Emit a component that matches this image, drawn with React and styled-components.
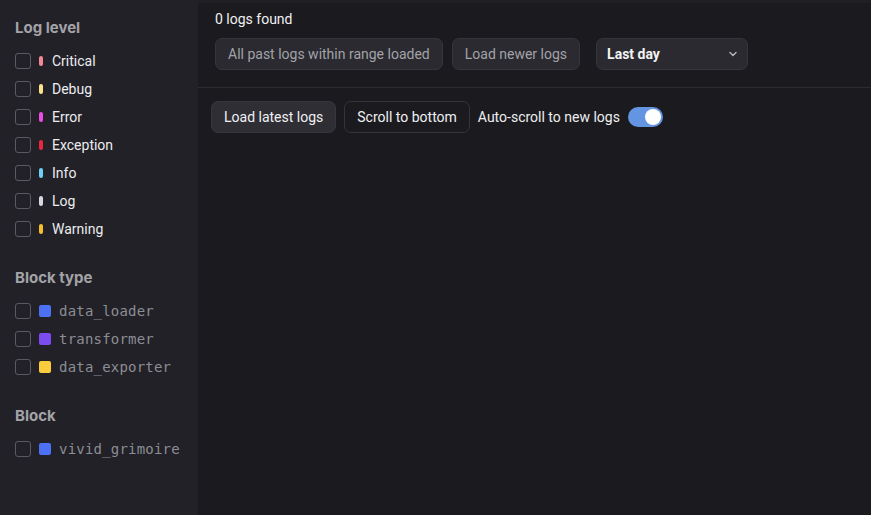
import React from 'react';
import styled, { createGlobalStyle } from 'styled-components';

const GlobalStyle = createGlobalStyle`
    html, body {
        margin: 0;
        padding: 0;
        background: #1c1c21;
        font-family: Roboto, "Noto Sans", sans-serif;
    }
`;

const LOG_LEVELS = [
    { name: 'Critical', color: '#f3889b' },
    { name: 'Debug', color: '#fce38a' },
    { name: 'Error', color: '#ea4ce8' },
    { name: 'Exception', color: '#ec263d' },
    { name: 'Info', color: '#6fd0f7' },
    { name: 'Log', color: '#d8d8e0' },
    { name: 'Warning', color: '#f5bf2c' },
];

const BLOCK_TYPES = [
    { name: 'data_loader', color: '#4d71f6' },
    { name: 'transformer', color: '#7d4cf0' },
    { name: 'data_exporter', color: '#fbcc3c' },
];

const BLOCKS = [{ name: 'vivid_grimoire', color: '#4d71f6' }];

const FilterSection = ({ title, items, mono }) => (
    <Section>
        <SectionTitle>{title}</SectionTitle>
        <List>
            {items.map((item) => (
                <Row key={item.name}>
                    <Checkbox />
                    {mono ? <Square $color={item.color} /> : <Pill $color={item.color} />}
                    <Label $mono={mono}>{item.name}</Label>
                </Row>
            ))}
        </List>
    </Section>
);

const App = () => {
    return (
        <>
            <GlobalStyle />
            <Page>
                <Sidebar>
                    <FilterSection title="Log level" items={LOG_LEVELS} />
                    <FilterSection title="Block type" items={BLOCK_TYPES} mono />
                    <FilterSection title="Block" items={BLOCKS} mono />
                </Sidebar>
                <Main>
                    <Header>
                        <Count>0 logs found</Count>
                        <Toolbar>
                            <GhostButton>All past logs within range loaded</GhostButton>
                            <GhostButton>Load newer logs</GhostButton>
                            <Select>
                                <span>Last day</span>
                                <svg width="12" height="12" viewBox="0 0 12 12">
                                    <path d="M3 4.5 L6 7.5 L9 4.5" fill="none" stroke="#b8b8be" strokeWidth="1.4" strokeLinecap="round" strokeLinejoin="round" />
                                </svg>
                            </Select>
                        </Toolbar>
                    </Header>
                    <Actions>
                        <Button $primary>Load latest logs</Button>
                        <Button>Scroll to bottom</Button>
                        <ToggleLabel>Auto-scroll to new logs</ToggleLabel>
                        <Toggle $on />
                    </Actions>
                </Main>
            </Page>
        </>
    );
};

export default App;

const Page = styled.div`
    display: flex;
    width: 871px;
    height: 515px;
    overflow: hidden;
`;

const Sidebar = styled.aside`
    width: 198px;
    flex-shrink: 0;
    background: #212127;
    padding: 17px 15px 0;
    box-sizing: border-box;
    display: flex;
    flex-direction: column;
    gap: 29px;
`;

const Section = styled.div`
    display: flex;
    flex-direction: column;
`;

const SectionTitle = styled.div`
    font-family: Inter, Roboto, sans-serif;
    font-weight: 700;
    font-size: 15px;
    line-height: 22px;
    color: #a3a3a8;
    margin-bottom: 13px;
`;

const List = styled.div`
    display: flex;
    flex-direction: column;
    gap: 10px;
`;

const Row = styled.label`
    display: flex;
    align-items: center;
    height: 18px;
`;

const Checkbox = styled.span`
    width: 14px;
    height: 14px;
    border: 1px solid #5a5a62;
    border-radius: 3px;
    box-sizing: content-box;
    margin-right: 8px;
`;

const Pill = styled.span`
    width: 4px;
    height: 10px;
    border-radius: 2px;
    background: ${(p) => p.$color};
    margin-right: 9px;
`;

const Square = styled.span`
    width: 12px;
    height: 12px;
    border-radius: 2px;
    background: ${(p) => p.$color};
    margin-right: 8px;
`;

const Label = styled.span`
    font-family: ${(p) => (p.$mono ? '"DejaVu Sans Mono", "Liberation Mono", monospace' : 'Roboto, sans-serif')};
    font-size: 14px;
    letter-spacing: ${(p) => (p.$mono ? '0.2px' : '0')};
    color: ${(p) => (p.$mono ? '#8d8d94' : '#ececef')};
`;

const Main = styled.main`
    flex: 1;
    background: #1b1b1f;
    border-top: 3px solid #1f1f24;
    display: flex;
    flex-direction: column;
`;

const Header = styled.div`
    padding: 8px 17px 17px;
    border-bottom: 1px solid #2b2b31;
    display: flex;
    flex-direction: column;
    gap: 10px;
`;

const Count = styled.div`
    font-size: 14px;
    line-height: 17px;
    color: #f0f0f2;
`;

const Toolbar = styled.div`
    display: flex;
    align-items: center;
`;

const GhostButton = styled.button`
    height: 32px;
    padding: 0 12px;
    margin-right: 9px;
    background: #2a2a30;
    border: 1px solid #35353b;
    border-radius: 7px;
    font-family: Roboto, sans-serif;
    font-size: 14px;
    color: #a2a2a8;
    &:nth-child(2) { margin-right: 16px; }
`;

const Select = styled.div`
    width: 152px;
    height: 32px;
    box-sizing: border-box;
    padding: 0 8px 0 10px;
    background: #2a2a30;
    border: 1px solid #35353b;
    border-radius: 7px;
    display: flex;
    align-items: center;
    justify-content: space-between;
    font-size: 14px;
    font-weight: 700;
    color: #f2f2f4;
`;

const Actions = styled.div`
    display: flex;
    align-items: center;
    padding: 13px 13px;
    gap: 8px;
`;

const Button = styled.button`
    height: 32px;
    padding: 0 12px;
    background: ${(p) => (p.$primary ? '#2e2e34' : '#1b1b1f')};
    border: 1px solid ${(p) => (p.$primary ? '#36363c' : '#34343a')};
    border-radius: 7px;
    font-family: Roboto, sans-serif;
    font-size: 14px;
    color: #f0f0f2;
`;

const ToggleLabel = styled.span`
    font-size: 14px;
    color: #eeeef0;
`;

const Toggle = styled.span`
    position: relative;
    width: 35px;
    height: 20px;
    border-radius: 10px;
    background: ${(p) => (p.$on ? '#6495e3' : '#3a3a40')};
    &::after {
        content: '';
        position: absolute;
        top: 2px;
        left: ${(p) => (p.$on ? '17px' : '2px')};
        width: 16px;
        height: 16px;
        border-radius: 50%;
        background: #ffffff;
    }
`;
